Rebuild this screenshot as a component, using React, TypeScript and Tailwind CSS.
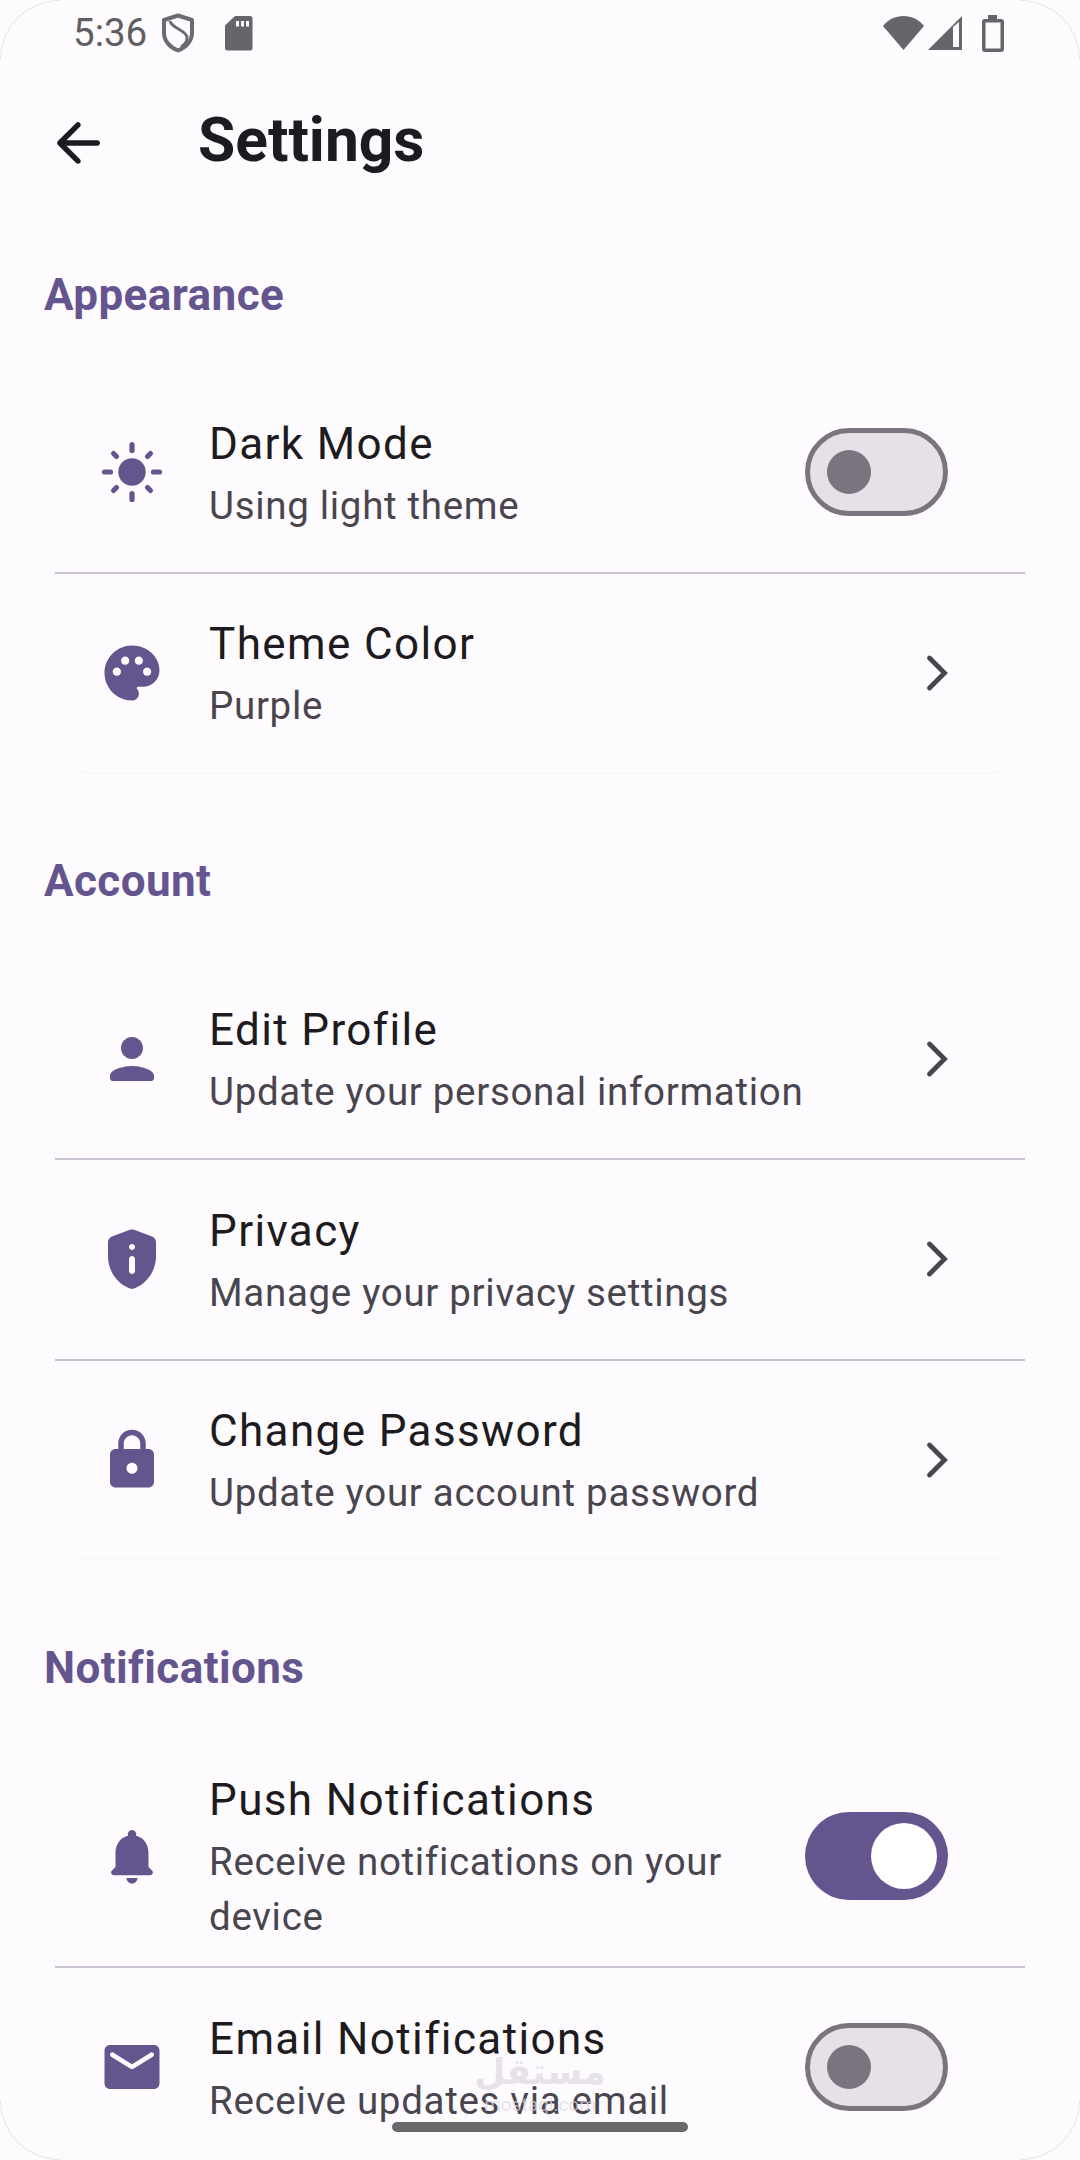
import React from "react";

const P = "#65558F";

function Icon({ d, size = 66, color = P, viewBox = "0 0 24 24" }: { d: string; size?: number; color?: string; viewBox?: string }) {
  return (
    <svg width={size} height={size} viewBox={viewBox} fill={color} fillRule="evenodd" className="shrink-0">
      <path d={d} />
    </svg>
  );
}

const paths = {
  back: "M19 11H7.83l4.88-4.88c.39-.39.39-1.03 0-1.42-.39-.39-1.02-.39-1.41 0l-6.59 6.59c-.39.39-.39 1.02 0 1.41l6.59 6.59c.39.39 1.02.39 1.41 0 .39-.39.39-1.02 0-1.41L7.83 13H19c.55 0 1-.45 1-1s-.45-1-1-1z",
  palette: "M12 2C6.49 2 2 6.49 2 12s4.49 10 10 10c1.38 0 2.5-1.12 2.5-2.5 0-.61-.23-1.2-.64-1.67-.08-.1-.13-.21-.13-.33 0-.28.22-.5.5-.5H16c3.31 0 6-2.69 6-6 0-4.96-4.49-9-10-9zm5.5 11c-.83 0-1.5-.67-1.5-1.5s.67-1.5 1.5-1.5 1.5.67 1.5 1.5-.67 1.5-1.5 1.5zm-3-4c-.83 0-1.5-.67-1.5-1.5S13.67 6 14.5 6s1.5.67 1.5 1.5S15.33 9 14.5 9zM5 11.5c0-.83.67-1.5 1.5-1.5s1.5.67 1.5 1.5S7.33 13 6.5 13 5 12.33 5 11.5zm6-4c0 .83-.67 1.5-1.5 1.5S8 8.33 8 7.5 8.67 6 9.5 6s1.5.67 1.5 1.5z",
  person: "M12 12c2.21 0 4-1.79 4-4s-1.79-4-4-4-4 1.79-4 4 1.79 4 4 4zm0 2.5c-2.67 0-8 1.2-8 3.5v1c0 .55.45 1 1 1h14c.55 0 1-.45 1-1v-1c0-2.3-5.33-3.5-8-3.5z",
  privacy: "M11.3 2.26l-6 2.25C4.52 4.81 4 5.55 4 6.39v4.71c0 5.05 3.41 9.76 8 10.9 4.59-1.14 8-5.85 8-10.9V6.39c0-.83-.52-1.58-1.3-1.87l-6-2.25c-.45-.17-.95-.17-1.4-.01zM12 7c.55 0 1 .45 1 1s-.45 1-1 1-1-.45-1-1 .45-1 1-1zm0 10c-.55 0-1-.45-1-1v-4c0-.55.45-1 1-1s1 .45 1 1v4c0 .55-.45 1-1 1z",
  lock: "M18 8h-1V6c0-2.76-2.24-5-5-5S7 3.24 7 6v2H6c-1.1 0-2 .9-2 2v10c0 1.1.9 2 2 2h12c1.1 0 2-.9 2-2V10c0-1.1-.9-2-2-2zm-6 9c-1.1 0-2-.9-2-2s.9-2 2-2 2 .9 2 2-.9 2-2 2zM9 8V6c0-1.66 1.34-3 3-3s3 1.34 3 3v2H9z",
  bell: "M12 22c1.1 0 2-.9 2-2h-4c0 1.1.9 2 2 2zm6-6v-5c0-3.07-1.63-5.64-4.5-6.32V4c0-.83-.67-1.5-1.5-1.5s-1.5.67-1.5 1.5v.68C7.64 5.36 6 7.92 6 11v5l-1.29 1.29c-.63.63-.19 1.71.7 1.71h13.17c.89 0 1.34-1.08.71-1.71L18 16z",
  email: "M20 4H4c-1.1 0-1.99.9-1.99 2L2 18c0 1.1.9 2 2 2h16c1.1 0 2-.9 2-2V6c0-1.1-.9-2-2-2zm-.4 4.25l-7.07 4.42c-.32.2-.74.2-1.06 0L4.4 8.25c-.25-.16-.4-.43-.4-.72 0-.67.73-1.07 1.3-.72L12 11l6.7-4.19c.57-.35 1.3.05 1.3.72 0 .29-.15.56-.4.72z",
};

function Chevron() {
  return (
    <svg width={66} height={66} viewBox="0 0 66 66" fill="none" className="shrink-0">
      <polyline points="25.5,18 40.5,33 25.5,48" stroke="#49454F" strokeWidth="4.8" strokeLinecap="round" strokeLinejoin="miter" />
    </svg>
  );
}

function Sun() {
  const rays = [
    [33, 5.5, 33, 11.5],
    [33, 54.5, 33, 60.5],
    [5.5, 33, 11.5, 33],
    [54.5, 33, 60.5, 33],
    [14.5, 14.5, 17.5, 17.5],
    [48.5, 17.5, 51.5, 14.5],
    [14.5, 51.5, 17.5, 48.5],
    [48.5, 48.5, 51.5, 51.5],
  ];
  return (
    <svg width={66} height={66} viewBox="0 0 66 66" className="shrink-0">
      <circle cx="33" cy="33" r="13.7" fill={P} />
      {rays.map((r, i) => (
        <line key={i} x1={r[0]} y1={r[1]} x2={r[2]} y2={r[3]} stroke={P} strokeWidth="5.2" strokeLinecap="round" />
      ))}
    </svg>
  );
}

function Toggle({ on }: { on?: boolean }) {
  return on ? (
    <div className="mr-[22px] flex h-[88px] w-[143px] shrink-0 items-center justify-end rounded-full bg-[#65558F] pr-[11px]">
      <div className="h-[66px] w-[66px] rounded-full bg-white" />
    </div>
  ) : (
    <div className="mr-[22px] flex h-[88px] w-[143px] shrink-0 items-center rounded-full border-[5.5px] border-[#79747E] bg-[#E6E0E9] pl-[16.5px]">
      <div className="h-[44px] w-[44px] rounded-full bg-[#79747E]" />
    </div>
  );
}

function Row({ icon, title, sub, on, toggle, last }: { icon: React.ReactNode; title: string; sub: string; on?: boolean; toggle?: boolean; last?: boolean }) {
  return (
    <div className={`flex items-center py-[22px] pl-[44px] pr-[55px] ${last ? "min-h-[198px]" : "min-h-[200.75px] border-b-[2.75px] border-[#CAC4D0]"}`}>
      {icon}
      <div className="ml-[44px] min-w-0 flex-1 pr-[22px]">
        <div className="mb-[1px] text-[44px] leading-[65px] tracking-[1.375px] text-[#1D1B20]">{title}</div>
        <div className="text-[38.5px] leading-[55px] tracking-[0.6875px] text-[#49454F]">{sub}</div>
      </div>
      {toggle ? <Toggle on={on} /> : <Chevron />}
    </div>
  );
}

function Section({ label, children }: { label: string; children: React.ReactNode }) {
  return (
    <section className="px-[44px]">
      <h2 className="mb-[45px] text-[44px] font-bold leading-[66px] tracking-[0.42px] text-[#65558F]">{label}</h2>
      <div className="mx-[11px] mb-[76.5px] overflow-hidden rounded-[33px] bg-[#FEFBFE] shadow-[0_1px_3px_rgba(60,40,80,0.04)]">{children}</div>
    </section>
  );
}

function Corner({ className }: { className: string }) {
  return <div className={`absolute h-[60px] w-[60px] border-[#e6e4e6] ${className}`} />;
}

export default function App() {
  return (
    <div className="relative h-[2160px] w-[1080px] overflow-hidden bg-[#FEFBFE] font-['Roboto',sans-serif]">
      {/* Status bar */}
      <div className="flex h-[66px] items-center pl-[73px] pr-[76px] text-[#605E62]">
        <span className="text-[38.5px] leading-none">5:36</span>
        <svg width="34" height="40" viewBox="0 0 34 40" className="ml-[14px]" fill="none">
          <path d="M17 2.5 L31 7 V20 C31 28 25 34.5 17 37.5 C9 34.5 3 28 3 20 V7 Z" stroke="#6D6B6F" strokeWidth="4" strokeLinejoin="round" />
          <path d="M9 8 C10 15 25 17 26 24 C26.5 28 23 32 20 34" stroke="#6D6B6F" strokeWidth="3" />
        </svg>
        <svg width="28" height="35" viewBox="0 0 28 35" className="ml-[30px]">
          <path fill="#676569" d="M10 0 H25 A2.5 2.5 0 0 1 27.5 2.5 V32 A2.5 2.5 0 0 1 25 34.5 H2.5 A2.5 2.5 0 0 1 0 32 V9.5 Z M11 5 V10.5 H14 V5 Z M16 5 V10.5 H19 V5 Z M21 5 V10.5 H24 V5 Z" fillRule="evenodd" />
        </svg>
        <div className="flex-1" />
        <svg width="41" height="34" viewBox="0 0 41 34">
          <path fill="#676569" d="M20.5 34 L0 10 C5 3.5 12.5 0 20.5 0 C28.5 0 36 3.5 41 10 Z" />
        </svg>
        <svg width="34" height="34" viewBox="0 0 34 34" className="ml-[4px]">
          <path fill="#676569" fillRule="evenodd" d="M0 34 L34 0 V34 Z M25 11 V31 H31 V6 Z" />
        </svg>
        <svg width="22" height="37" viewBox="0 0 22 37" className="ml-[20px]">
          <path fill="#676569" fillRule="evenodd" d="M6 0 H15 V4 H19 A3 3 0 0 1 22 7 V34 A3 3 0 0 1 19 37 H3 A3 3 0 0 1 0 34 V7 A3 3 0 0 1 3 4 H6 Z M3.5 7.5 V33.5 H18.5 V7.5 Z" />
        </svg>
      </div>

      {/* App bar */}
      <div className="mb-[42px] flex h-[154px] items-center pl-[45px]">
        <Icon d={paths.back} color="#1D1B20" />
        <h1 className="ml-[87px] mb-[4px] text-[60.5px] font-bold leading-[66px] text-[#1D1B20]">Settings</h1>
      </div>

      <Section label="Appearance">
        <Row icon={<Sun />} title="Dark Mode" sub="Using light theme" toggle />
        <Row icon={<Icon d={paths.palette} />} title="Theme Color" sub="Purple" last />
      </Section>
      <Section label="Account">
        <Row icon={<Icon d={paths.person} />} title="Edit Profile" sub="Update your personal information" />
        <Row icon={<Icon d={paths.privacy} viewBox="1 1 22 22" />} title="Privacy" sub="Manage your privacy settings" />
        <Row icon={<Icon d={paths.lock} />} title="Change Password" sub="Update your account password" last />
      </Section>
      <Section label="Notifications">
        <Row icon={<Icon d={paths.bell} />} title="Push Notifications" sub="Receive notifications on your device" toggle on />
        <Row icon={<Icon d={paths.email} />} title="Email Notifications" sub="Receive updates via email" toggle last />
      </Section>

      {/* Watermark */}
      <div className="pointer-events-none absolute left-[470px] top-[2050px] flex w-[140px] flex-col items-center text-[#dcd8df] opacity-70">
        <span className="font-['DejaVu_Sans',sans-serif] text-[36px] font-bold leading-[44px]">مستقل</span>
        <span className="text-[19px] leading-[22px]">mostaql.com</span>
      </div>

      {/* Home indicator */}
      <div className="absolute left-[392px] top-[2122px] h-[10px] w-[296px] rounded-full bg-[#6A686B]" />

      {/* Screen corners */}
      <Corner className="left-0 top-0 rounded-tl-[60px] border-l border-t" />
      <Corner className="right-0 top-0 rounded-tr-[60px] border-r border-t" />
      <Corner className="bottom-0 left-0 rounded-bl-[60px] border-b border-l" />
      <Corner className="bottom-0 right-0 rounded-br-[60px] border-b border-r" />
    </div>
  );
}
